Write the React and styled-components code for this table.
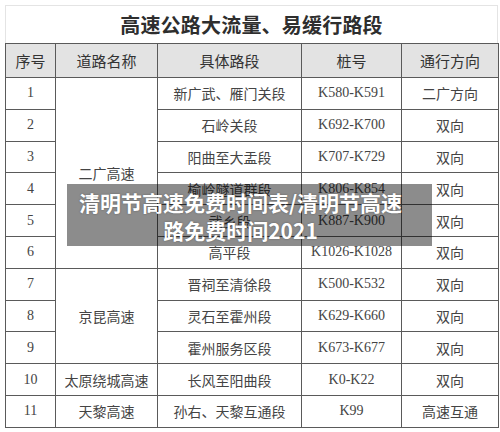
import React from 'react';
import styled, { createGlobalStyle } from 'styled-components';

const rows = [
  { no: 1, road: '二广高速', span: 6, part: '新广武、雁门关段', pile: 'K580-K591', dir: '二广方向' },
  { no: 2, part: '石岭关段', pile: 'K692-K700', dir: '双向' },
  { no: 3, part: '阳曲至大盂段', pile: 'K707-K729', dir: '双向' },
  { no: 4, part: '榆岭隧道群段', pile: 'K806-K854', dir: '双向' },
  { no: 5, part: '武乡段', pile: 'K887-K900', dir: '双向' },
  { no: 6, part: '高平段', pile: 'K1026-K1028', dir: '双向' },
  { no: 7, road: '京昆高速', span: 3, part: '晋祠至清徐段', pile: 'K500-K532', dir: '双向' },
  { no: 8, part: '灵石至霍州段', pile: 'K629-K660', dir: '双向' },
  { no: 9, part: '霍州服务区段', pile: 'K673-K677', dir: '双向' },
  { no: 10, road: '太原绕城高速', span: 1, part: '长风至阳曲段', pile: 'K0-K22', dir: '双向' },
  { no: 11, road: '天黎高速', span: 1, part: '孙右、天黎互通段', pile: 'K99', dir: '高速互通' },
];

const App = () => {
  return (
    <>
      <GlobalStyle />
      <Page>
        <TitleBox>高速公路大流量、易缓行路段</TitleBox>
        <Table>
          <colgroup>
            <col style={{ width: 50 }} />
            <col style={{ width: 102 }} />
            <col style={{ width: 144 }} />
            <col style={{ width: 100 }} />
            <col style={{ width: 97 }} />
          </colgroup>
          <thead>
            <HeadRow>
              <Th>序号</Th>
              <Th>道路名称</Th>
              <Th>具体路段</Th>
              <Th>桩号</Th>
              <Th>通行方向</Th>
            </HeadRow>
          </thead>
          <tbody>
            {rows.map((r) => (
              <Row key={r.no}>
                <Td>{r.no}</Td>
                {r.road && <Td rowSpan={r.span}>{r.road}</Td>}
                <Td>{r.part}</Td>
                <Td>{r.pile}</Td>
                <Td>{r.dir}</Td>
              </Row>
            ))}
          </tbody>
        </Table>
        <Caption>清明节高速免费时间表/清明节高速路免费时间2021</Caption>
      </Page>
    </>
  );
};

export default App;

const GlobalStyle = createGlobalStyle`
  html, body {
    margin: 0;
    padding: 0;
    background: #fff;
  }
`;

const Page = styled.div`
  position: relative;
  width: 493px;
  height: 432px;
  padding: 5px 2px 0 5px;
  background: #fff;
  font-family: "Liberation Serif", "Noto Sans CJK SC", serif;
  color: #3a3a3a;
`;

const TitleBox = styled.div`
  box-sizing: border-box;
  height: 38px;
  border: 1px solid #e4e4e4;
  border-bottom: none;
  display: flex;
  align-items: center;
  justify-content: center;
  font-size: 20px;
  font-weight: 700;
  color: #2e2e2e;
  letter-spacing: 0.2px;
`;

const Table = styled.table`
  width: 493px;
  table-layout: fixed;
  border-collapse: collapse;
  border: 1.5px solid #5a5a5a;
`;

const HeadRow = styled.tr`
  height: 34px;
  background: #e3e3e3;
`;

const Th = styled.th`
  border: 1px solid #5a5a5a;
  font-family: "Noto Sans CJK SC", sans-serif;
  font-weight: 400;
  font-size: 15px;
  color: #333;
  padding: 0;
  text-align: center;
`;

const Row = styled.tr`
  height: 31.8px;
`;

const Td = styled.td`
  border: 1px solid #5a5a5a;
  font-size: 14px;
  color: #444;
  padding: 0;
  text-align: center;
  vertical-align: middle;
  white-space: nowrap;
`;

const Caption = styled.div`
  position: absolute;
  left: 67px;
  top: 184px;
  width: 365px;
  height: 62px;
  box-sizing: border-box;
  padding: 4px 22px 0 4px;
  background: rgba(0, 0, 0, 0.45);
  color: #fff;
  font-family: "Noto Sans CJK SC", sans-serif;
  font-weight: 700;
  font-size: 21px;
  line-height: 28px;
  text-align: center;
  text-shadow: 0 0 2px rgba(0, 0, 0, 0.35);
`;
